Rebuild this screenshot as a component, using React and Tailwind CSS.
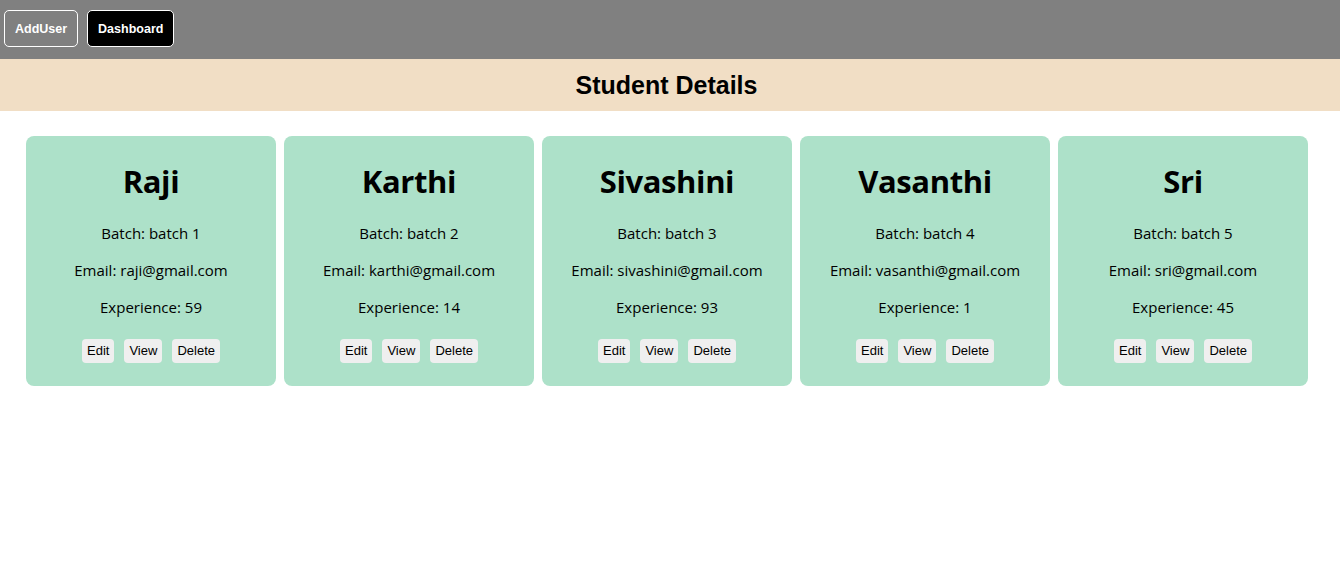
import React from "react";

const students = [
  { name: "Raji", batch: "batch 1", email: "raji@gmail.com", exp: 59 },
  { name: "Karthi", batch: "batch 2", email: "karthi@gmail.com", exp: 14 },
  { name: "Sivashini", batch: "batch 3", email: "sivashini@gmail.com", exp: 93 },
  { name: "Vasanthi", batch: "batch 4", email: "vasanthi@gmail.com", exp: 1 },
  { name: "Sri", batch: "batch 5", email: "sri@gmail.com", exp: 45 },
];

function Card({ s }) {
  return (
    <div className="w-[250px] h-[250px] rounded-[8px] bg-[#ade1c9] flex flex-col items-center pt-[26px] text-black" style={{ fontFamily: '"Open Sans", sans-serif' }}>
      <h2 className="text-[31px] leading-[38px] font-bold tracking-[-0.4px]">{s.name}</h2>
      <p className="mt-[23px] text-[15px] leading-[21px]">Batch: {s.batch}</p>
      <p className="mt-[16px] text-[15px] leading-[21px]">Email: {s.email}</p>
      <p className="mt-[16px] text-[15px] leading-[21px]">Experience: {s.exp}</p>
      <div className="mt-[21px] flex gap-[10px]" style={{ fontFamily: '"Liberation Sans", Arial, sans-serif' }}>
        {["Edit", "View", "Delete"].map((b) => (
          <button key={b} className="h-[24px] px-[5px] rounded-[4px] bg-[#efefef] text-[13px] text-black">{b}</button>
        ))}
      </div>
    </div>
  );
}

export default function App() {
  return (
    <div className="min-h-[565px] bg-white" style={{ fontFamily: '"Liberation Sans", Arial, sans-serif' }}>
      <nav className="h-[59px] bg-[#808080] flex items-start gap-[9px] px-[4px] pt-[10px]">
        <button className="h-[37px] px-[10px] pt-[2px] border border-white rounded-[5px] text-white text-[12.5px] font-bold">AddUser</button>
        <button className="h-[37px] px-[10px] pt-[2px] border border-white rounded-[5px] bg-black text-white text-[12.5px] font-bold">Dashboard</button>
      </nav>
      <div className="h-[52px] bg-[#f1dec5] flex items-center justify-center pr-[7px] pt-[1px]">
        <h1 className="text-[25px] font-bold text-black">Student Details</h1>
      </div>
      <div className="flex gap-[8px] pl-[26px] pt-[25px]">
        {students.map((s) => (
          <Card key={s.name} s={s} />
        ))}
      </div>
    </div>
  );
}
